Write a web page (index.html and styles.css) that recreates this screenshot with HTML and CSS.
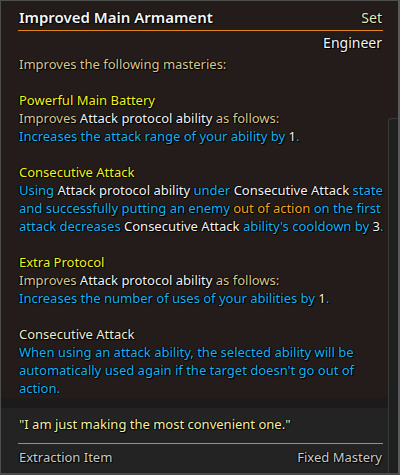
FILE: index.html
```html
<!DOCTYPE html>
<html>
<head>
<meta charset="utf-8">
<link rel="stylesheet" href="styles.css">
</head>
<body>
<div class="panel">
  <div class="main">
    <div class="title-row">
      <span class="title">Improved Main Armament</span>
      <span class="set">Set</span>
    </div>
    <div class="class-row">Engineer</div>
    <div class="body">
      <p><span class="tan">Improves the following masteries:</span></p>
      <p class="blank"></p>
      <p class="yel">Powerful Main Battery</p>
      <p><span class="tan">Improves</span> <span class="wht">Attack protocol ability</span> <span class="tan">as follows:</span></p>
      <p class="blu">Increases the attack range of your ability by <span class="wht">1</span>.</p>
      <p class="blank"></p>
      <p class="yel">Consecutive Attack</p>
      <p class="blu">Using <span class="wht">Attack protocol ability</span> under <span class="wht">Consecutive Attack</span> state<br>and successfully putting an enemy <span class="org">out of action</span> on the first<br>attack decreases <span class="wht">Consecutive Attack</span> ability's cooldown by <span class="wht">3</span>.</p>
      <p class="blank"></p>
      <p class="yel">Extra Protocol</p>
      <p><span class="tan">Improves</span> <span class="wht">Attack protocol ability</span> <span class="tan">as follows:</span></p>
      <p class="blu">Increases the number of uses of your abilities by <span class="wht">1</span>.</p>
      <p class="blank"></p>
      <p class="crm">Consecutive Attack</p>
      <p class="blu">When using an attack ability, the selected ability will be<br>automatically used again if the target doesn't go out of<br>action.</p>
    </div>
  </div>
  <div class="bottom">
    <p class="quote">"I am just making the most convenient one."</p>
    <div class="divider"></div>
    <div class="footer">
      <span>Extraction Item</span>
      <span>Fixed Mastery</span>
    </div>
  </div>
  <div class="scrollbar"></div>
</div>
</body>
</html>
```
FILE: styles.css
```css
* { box-sizing: border-box; }
html, body { margin: 0; padding: 0; background: #1a1a1a; }
body { width: 400px; height: 475px; overflow: hidden; }

.panel {
  position: relative;
  width: 400px;
  height: 475px;
  border: 1px solid #4d4d4d;
  border-right: 2px solid #5a5a5a;
  border-bottom: 2px solid #4a4a4a;
  background: #231c1a;
  display: flex;
  flex-direction: column;
  font-family: "Noto Sans", "Open Sans", sans-serif;
  font-size: 13px;
  font-weight: 400;
  color: #eeeeee;
  text-shadow: 0 0 1px #000, 1px 1px 1px #000, -1px 0 1px #000;
}

.main {
  flex: 1;
  padding: 0 15px 0 17px;
}

.title-row {
  display: flex;
  justify-content: space-between;
  align-items: center;
  height: 30px;
  padding-top: 3px;
  padding-left: 1px;
  border-bottom: 1px solid #e0851c;
}
.title { font-size: 15px; font-weight: 600; color: #f6f6f6; }
.set { font-size: 14px; color: #efe9b4; padding-right: 1px; }

.class-row {
  text-align: right;
  font-size: 14px;
  color: #f4f4f4;
  height: 24px;
  line-height: 24px;
  padding-right: 1px;
}

.body { padding-left: 1px; }
.body p {
  margin: 0;
  line-height: 18px;
  white-space: nowrap;
}
.body p.blank { height: 18px; }

.tan { color: #dac78e; }
.yel { color: #f5f11c; }
.blu { color: #18b2f0; }
.wht { color: #f4f4f4; }
.org { color: #f4a41c; }
.crm { color: #f1edcb; }

.bottom {
  height: 75px;
  background: linear-gradient(#1c1a1a 0, #1c1a1a 10px, #232323 10px);
  padding: 17px 15px 0 17px;
}
.quote {
  margin: 0;
  color: #f6f0a4;
  line-height: 18px;
  padding-left: 1px;
  height: 28px;
}
.divider {
  height: 1px;
  background: #e47f12;
}
.footer {
  display: flex;
  justify-content: space-between;
  color: #cbcbcb;
  line-height: 18px;
  padding: 4px 1px 0 1px;
}

.scrollbar {
  position: absolute;
  right: 0;
  top: 117px;
  bottom: 0;
  width: 10px;
  background: #1e1f1f;
  border: 1px solid #3a3a3a;
  border-right: none;
  border-bottom: none;
  border-top-left-radius: 4px;
}
```
